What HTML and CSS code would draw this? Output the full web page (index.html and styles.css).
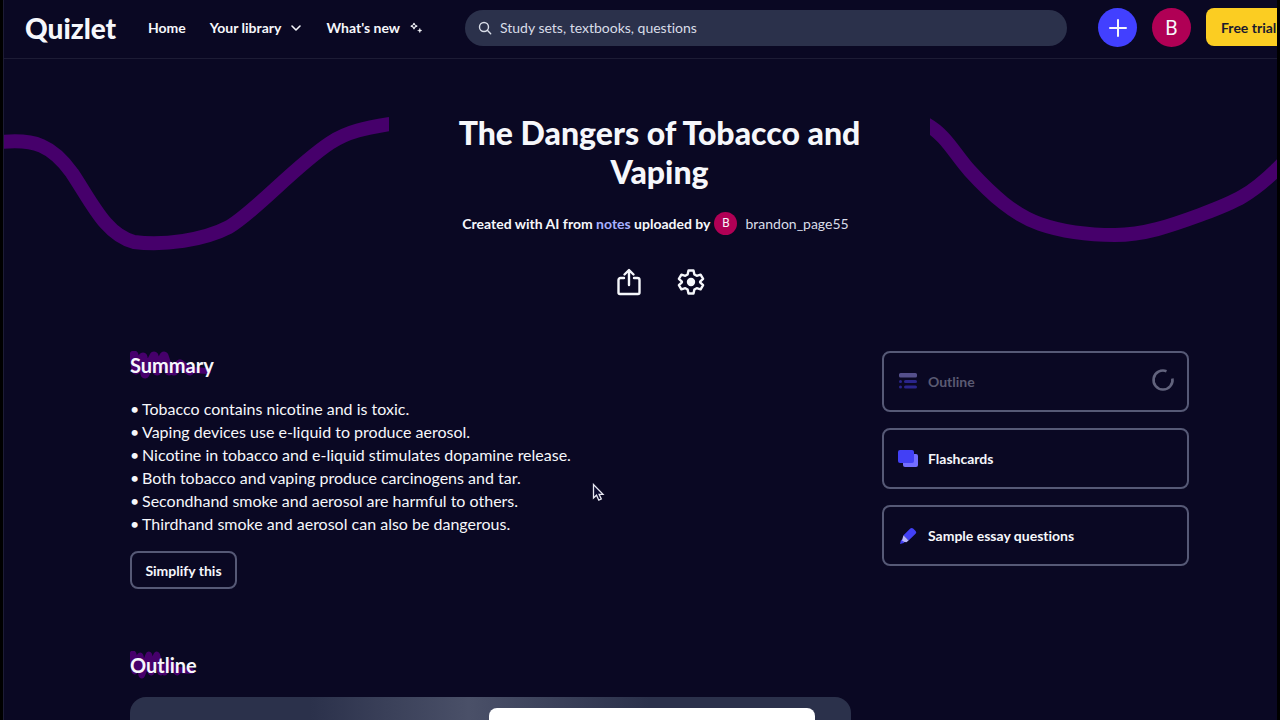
FILE: index.html
```html
<!DOCTYPE html>
<html lang="en">
<head>
    <meta charset="UTF-8">
    <meta name="viewport" content="width=device-width, initial-scale=1.0">
    <title>The Dangers of Tobacco and Vaping | Quizlet</title>
    <link rel="stylesheet" href="styles.css">
</head>
<body>

<div class="app">
    <header class="header">
        <a class="logo" href="#">Quizlet</a>
        <nav class="nav">
            <a class="nav-link" href="#">Home</a>
            <button class="nav-link" type="button">Your library
                <svg width="12" height="12" viewBox="0 0 12 12" fill="none" stroke="currentColor" stroke-width="1.6" stroke-linecap="round" stroke-linejoin="round"><path d="M2 4l4 4 4-4"/></svg>
            </button>
            <a class="nav-link" href="#">What's new
                <svg width="14" height="14" viewBox="0 0 14 14" fill="none" stroke="currentColor" stroke-width="1.1" stroke-linejoin="round"><path d="M5 2.2c.4 1.9 1 2.5 2.9 2.9C6 5.5 5.4 6.1 5 8c-.4-1.9-1-2.5-2.9-2.9C4 4.7 4.6 4.1 5 2.2z"/><path d="M10.8 7.3c.3 1.5.7 1.9 2.2 2.2-1.5.3-1.9.7-2.2 2.2-.3-1.5-.7-1.9-2.2-2.2 1.5-.3 1.9-.7 2.2-2.2z" fill="currentColor" stroke-width=".4"/></svg>
            </a>
        </nav>
        <label class="search">
            <svg width="14" height="14" viewBox="0 0 14 14" fill="none" stroke="currentColor" stroke-width="1.4" stroke-linecap="round"><circle cx="6" cy="6" r="4.5"/><path d="M9.3 9.3l3.4 3.4"/></svg>
            <input type="text" placeholder="Study sets, textbooks, questions" aria-label="Search">
        </label>
        <div class="actions">
            <button class="round-button create" type="button" aria-label="Create">
                <svg width="20" height="20" viewBox="0 0 20 20" stroke="currentColor" stroke-width="2" stroke-linecap="round"><path d="M10 2v16M2 10h16"/></svg>
            </button>
            <button class="round-button avatar" type="button">B</button>
            <button class="trial-button" type="button">Free trial</button>
        </div>
    </header>

    <section class="hero">
        <svg class="wave" viewBox="0 0 385 140" height="140" fill="none" stroke="#46006b" stroke-width="14"><path d="M-2 29C30 26 48 32 68 60C88 90 102 122 130 129C160 133 200 127 225 114C252 98 290 54 326 30C344 18 362 15 386 11"/></svg>
        <div class="hero-content">
            <h1>The Dangers of Tobacco and Vaping</h1>
            <p class="byline">
                <span>Created with AI from <a href="#">notes</a> uploaded by</span>
                <span class="avatar small-avatar">B</span>
                <span class="username">brandon_page55</span>
            </p>
            <div class="hero-buttons">
                <button type="button" aria-label="Share">
                    <svg width="28" height="28" viewBox="0 0 28 28" fill="none" stroke="currentColor" stroke-width="2.4" stroke-linecap="round" stroke-linejoin="round"><path d="M9 10H5.500A2 2 0 0 0 3.500 12v12.500a1.500 1.500 0 0 0 1.500 1.500h18a1.500 1.500 0 0 0 1.500-1.500V12a2 2 0 0 0-2-2H19M14 17V2.500M9.500 6.500L14 2l4.500 4.500"/></svg>
                </button>
                <button type="button" aria-label="Settings">
                    <svg width="28" height="28" viewBox="0 0 28 28" fill="none" stroke="currentColor" stroke-width="2.4" stroke-linejoin="round"><path d="M11.500 2.500h5l.9 4 2.300 1.300 3.900-1.200 2.500 4.300-3 2.800v.600l3 2.800-2.500 4.300-3.900-1.200-2.300 1.300-.9 4h-5l-.9-4-2.300-1.300-3.900 1.200-2.500-4.300 3-2.800v-.600l-3-2.800 2.500-4.300 3.900 1.200 2.300-1.300z"/><circle cx="14" cy="14" r="3" fill="currentColor"/></svg>
                </button>
            </div>
        </div>
        <svg class="wave" viewBox="0 0 347 140" height="140" fill="none" stroke="#46006b" stroke-width="14"><path d="M-4 11C16 22 24 40 40 58C62 82 84 102 110 111C136 120 166 122 185 122C214 122 240 113 270 102C302 90 320 84 352 51"/></svg>
    </section>

    <main class="main">
        <div class="notes">
            <section class="summary">
                <h2 class="section-title">
                    <svg class="brush" width="84" height="30" viewBox="0 0 84 30" fill="none" stroke="#46006b" stroke-linecap="round" stroke-linejoin="round"><path d="M4 4L6 19L13 6L15 23L24 5L27 20L34 5L39 20" stroke-width="9"/><path d="M36 12L44 20L50 13L60 20" stroke-width="9"/><path d="M62 19L78 20" stroke-width="6"/></svg>
                    <span>Summary</span>
                </h2>
                <ul class="summary-list">
                    <li>Tobacco contains nicotine and is toxic.</li>
                    <li>Vaping devices use e-liquid to produce aerosol.</li>
                    <li>Nicotine in tobacco and e-liquid stimulates dopamine release.</li>
                    <li>Both tobacco and vaping produce carcinogens and tar.</li>
                    <li>Secondhand smoke and aerosol are harmful to others.</li>
                    <li>Thirdhand smoke and aerosol can also be dangerous.</li>
                </ul>
                <button class="simplify-button" type="button">Simplify this</button>
            </section>
            <section>
                <h2 class="section-title">
                    <svg class="brush" width="66" height="30" viewBox="0 0 84 30" preserveAspectRatio="none" fill="none" stroke="#46006b" stroke-linecap="round" stroke-linejoin="round"><path d="M4 4L6 19L13 6L15 23L24 5L27 20L34 5L39 20" stroke-width="9"/><path d="M36 12L44 20L50 13L60 20" stroke-width="9"/><path d="M62 19L78 20" stroke-width="6"/></svg>
                    <span>Outline</span>
                </h2>
                <div class="outline-card">
                    <div class="outline-sheet"></div>
                </div>
            </section>
        </div>

        <aside class="tools">
            <button class="tool" type="button" disabled>
                <svg width="20" height="20" viewBox="0 0 20 20"><path fill="#55508c" d="M2.500 1h15A1.500 1.500 0 0 1 19 2.500v1.500A1.500 1.500 0 0 1 17.500 5.500h-15A1.500 1.500 0 0 1 1 4v-1.500A1.500 1.500 0 0 1 2.500 1z"/><g fill="#2a258c"><rect x="1" y="8" width="3" height="3" rx="1.5"/><rect x="6" y="8" width="13" height="3" rx="1.5"/><rect x="1" y="13.5" width="3" height="3" rx="1.5"/><rect x="6" y="13.5" width="13" height="3" rx="1.5"/></g></svg>
                <span>Outline</span>
                <svg class="spinner" width="24" height="24" viewBox="0 0 24 24" fill="none" stroke="#62637d" stroke-width="2.6"><path d="M15.500 1.200A9.500 9.500 0 1 0 21.400 8.500"/></svg>
            </button>
            <button class="tool" type="button">
                <svg width="20" height="20" viewBox="0 0 20 20"><rect x="5" y="5" width="15" height="13" rx="2" fill="#736dff"/><rect x="0" y="1" width="16" height="13" rx="2" fill="#4240f5"/></svg>
                <span>Flashcards</span>
            </button>
            <button class="tool" type="button">
                <svg width="20" height="20" viewBox="0 0 20 20"><path fill="#4240f5" d="M5.500 9.200L12.300 2.600a2 2 0 0 1 2.800 0L17.600 5a2 2 0 0 1 0 2.800l-7 6.800z"/><path fill="#b9b6ff" d="M5.500 9.200l5.100 5.400-2.200 1.600-4.800-.8z"/><path fill="#4240f5" d="M3.100 13.500l3.600 3.200L2 18z"/></svg>
                <span>Sample essay questions</span>
            </button>
        </aside>
    </main>

    <svg class="cursor" width="14" height="20" viewBox="0 0 14 20"><path d="M1.500 1.500v13.500l3-2.800 2.300 5 2.500-1.200-2.200-4.700h3.900z" fill="#0a092d" stroke="#e6e6f0" stroke-width="1.3"/></svg>
</div>

</body>
</html>
```
FILE: styles.css
```css
:root {
    --page: #0a0823;
    --line: #1d1c35;
    --outline: #565976;
    --field: #2b314b;
    --text: #f6f7fb;
    --indigo: #4240ff;
    --crimson: #b00055;
    --yellow: #fbcd22;
}

* {
    box-sizing: border-box;
}

body {
    margin: 0;
    padding: 0 3px;
    background-color: #000;
    color: var(--text);
    font-family: Lato, "Open Sans", sans-serif;
    font-size: 16px;
    font-variant-ligatures: none;
    overflow: hidden;
}

button,
input {
    font: inherit;
    font-variant-ligatures: none;
    color: inherit;
    background: none;
    border: none;
    padding: 0;
}

button {
    cursor: pointer;
}

a {
    color: inherit;
    text-decoration: none;
}

h1,
h2,
p,
ul {
    margin: 0;
    padding: 0;
}

svg {
    display: block;
    flex-shrink: 0;
}

.app {
    position: relative;
    height: 100vh;
    overflow: hidden;
    background-color: var(--page);
    border-left: 1px solid var(--line);
}

/* Header */
.header {
    display: flex;
    align-items: center;
    height: 59px;
    padding: 0 0 3px 21px;
    margin-right: -24px; /* the trial button runs off the edge */
    border-bottom: 1px solid var(--line);
}

.logo {
    width: 92px;
    font-size: 28px;
    line-height: 36px;
    font-weight: 900;
}

.nav {
    display: flex;
    gap: 24px;
    margin: 0 42px 0 31px;
}

.nav-link {
    display: flex;
    align-items: center;
    gap: 9px;
    font-size: 14px;
    font-weight: 700;
    white-space: nowrap;
}

.search {
    flex: 1;
    display: flex;
    align-items: center;
    gap: 8px;
    height: 36px;
    padding: 0 13px;
    border-radius: 18px;
    background-color: var(--field);
    color: #d9dde8;
}

.search input {
    flex: 1;
    min-width: 0;
    font-size: 14px;
    outline: none;
}

.search input::placeholder {
    color: inherit;
    opacity: 1;
}

.actions {
    display: flex;
    gap: 15px;
    margin-left: 31px;
}

.round-button {
    display: flex;
    align-items: center;
    justify-content: center;
    width: 39px;
    height: 39px;
    border-radius: 50%;
    font-size: 20px;
}

.create {
    background-color: var(--indigo);
}

.avatar {
    background-color: var(--crimson);
    font-family: Roboto, sans-serif;
}

.trial-button {
    width: 95px;
    height: 38px;
    padding-left: 15px;
    border-radius: 8px;
    background-color: var(--yellow);
    color: #1a1a2e;
    font-size: 14px;
    font-weight: 700;
    text-align: left;
}

/* Title area */
.hero {
    display: grid;
    grid-template-columns: 385px 1fr 347px;
    align-items: start;
    padding-top: 54px;
}

.wave {
    width: 100%;
}

.hero-content {
    display: flex;
    flex-direction: column;
    align-items: center;
}

h1 {
    max-width: 480px;
    font-size: 32px;
    line-height: 39px;
    font-weight: 900;
    text-align: center;
}

.byline {
    display: flex;
    align-items: center;
    margin-top: 21px;
    padding-right: 8px;
    font-size: 14px;
    font-weight: 700;
    white-space: nowrap;
}

.byline a {
    color: #a8b1ff;
}

.small-avatar {
    width: 23px;
    height: 23px;
    margin: 0 8px 0 4px;
    border-radius: 50%;
    font-size: 12px;
    line-height: 23px;
    font-weight: 400;
    text-align: center;
}

.username {
    color: #d9dde8;
    font-weight: 400;
}

.hero-buttons {
    display: flex;
    gap: 34px;
    margin-top: 33px;
}

/* Notes and tools */
.main {
    display: grid;
    grid-template-columns: minmax(0, 1fr) 307px;
    gap: 31px;
    align-items: start;
    padding: 0 88px 0 126px;
    margin-top: 55px;
}

.section-title {
    position: relative;
    font-size: 20px;
    line-height: 28px;
    font-weight: 700;
}

.section-title span {
    position: relative;
}

.brush {
    position: absolute;
    top: 0;
    left: 0;
}

.summary {
    margin-bottom: 62px;
}

.summary-list {
    list-style: none;
    margin: 18px 0 16px;
    line-height: 23px;
}

.summary-list li {
    display: flex;
}

.summary-list li::before {
    content: "•";
    width: 12px;
}

.simplify-button {
    width: 107px;
    height: 38px;
    border: 2px solid var(--outline);
    border-radius: 8px;
    font-size: 14px;
    font-weight: 700;
}

.outline-card {
    height: 320px;
    margin-top: 18px;
    padding: 11px 36px;
    border-radius: 16px;
    background: linear-gradient(90deg, #2b314b 25%, #4a5068 47%, #2b314b 72%);
}

.outline-sheet {
    width: 326px;
    height: 280px;
    margin-left: auto;
    border-radius: 8px;
    background-color: #fff;
}

.tools {
    display: flex;
    flex-direction: column;
    gap: 16px;
}

.tool {
    display: flex;
    align-items: center;
    gap: 10px;
    height: 61px;
    padding: 0 12px 0 14px;
    border: 2px solid var(--outline);
    border-radius: 8px;
    font-size: 14px;
    font-weight: 700;
}

.tool:disabled {
    color: #5a5a72;
    cursor: default;
}

.spinner {
    margin-left: auto;
    overflow: visible;
}

.cursor {
    position: absolute;
    left: 588px;
    top: 483px;
}
```
